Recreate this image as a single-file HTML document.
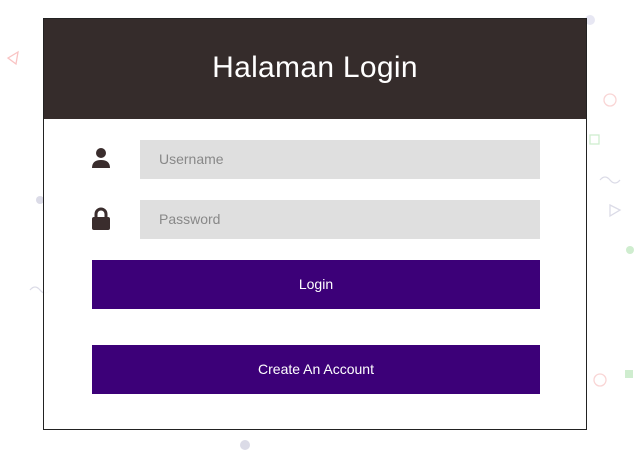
<!DOCTYPE html>
<html><head><style>
html,body{margin:0;padding:0;width:642px;height:452px;overflow:hidden;background:#fff;font-family:"Liberation Sans",sans-serif;}
.card{position:absolute;left:43px;top:18px;width:544px;height:412px;border:1px solid #222;box-sizing:border-box;background:rgba(255,255,255,0.9);}
.hdr{position:absolute;left:0;top:0;width:100%;height:100px;background:#352c2b;color:#fff;font-size:30px;text-align:center;line-height:98px;font-weight:300;letter-spacing:0.3px;}
.inp{position:absolute;left:96px;width:400px;height:39px;background:rgba(220,220,220,0.9);color:#888;font-size:14px;line-height:39px;padding-left:19px;box-sizing:border-box;}
.btn{position:absolute;left:48px;width:448px;height:49px;background:#3c0078;color:#fff;font-size:14px;text-align:center;line-height:49px;}
svg.i{position:absolute;}
.bg{position:absolute;opacity:.35;}
</style></head><body>
<svg class="bg" width="642" height="452" style="left:0;top:0">
<g fill="none" stroke-width="1.3">
<polygon points="8,58 18,52 16,64" stroke="#e55"/>
<circle cx="610" cy="100" r="6" stroke="#e88"/>
<circle cx="600" cy="380" r="6" stroke="#e88"/>
<path d="M600,180 q5,-6 10,0 t10,0" stroke="#99b"/>
<path d="M30,290 q5,-6 10,0 t10,0" stroke="#99b"/>
<polygon points="610,205 620,210 610,216" stroke="#99b"/>
<rect x="590" y="135" width="9" height="9" stroke="#7c7"/>
</g>
<g>
<circle cx="590" cy="20" r="5" fill="#bbd"/>
<circle cx="40" cy="200" r="4" fill="#99b"/>
<circle cx="630" cy="250" r="4" fill="#7c7"/>
<rect x="625" y="370" width="8" height="8" fill="#7c7"/>
<circle cx="245" cy="445" r="5" fill="#99b"/>
</g>
</svg>
<div class="card">
<div class="hdr">Halaman Login</div>
<svg class="i" style="left:47px;top:128px" width="20" height="22" viewBox="0 0 20 22"><circle cx="10" cy="6" r="5" fill="#3a2d2d"/><path d="M1,21 q0,-8 9,-8 q9,0 9,8 z" fill="#3a2d2d"/></svg>
<div class="inp" style="top:121px">Username</div>
<svg class="i" style="left:47px;top:188px" width="20" height="24" viewBox="0 0 20 24"><path d="M5,11 v-4 a5,5 0 0 1 10,0 v4" stroke="#3a2d2d" stroke-width="3" fill="none"/><rect x="1" y="10" width="18" height="13" rx="2" fill="#3a2d2d"/></svg>
<div class="inp" style="top:181px">Password</div>
<div class="btn" style="top:241px">Login</div>
<div class="btn" style="top:326px">Create An Account</div>
</div>
</body></html>
